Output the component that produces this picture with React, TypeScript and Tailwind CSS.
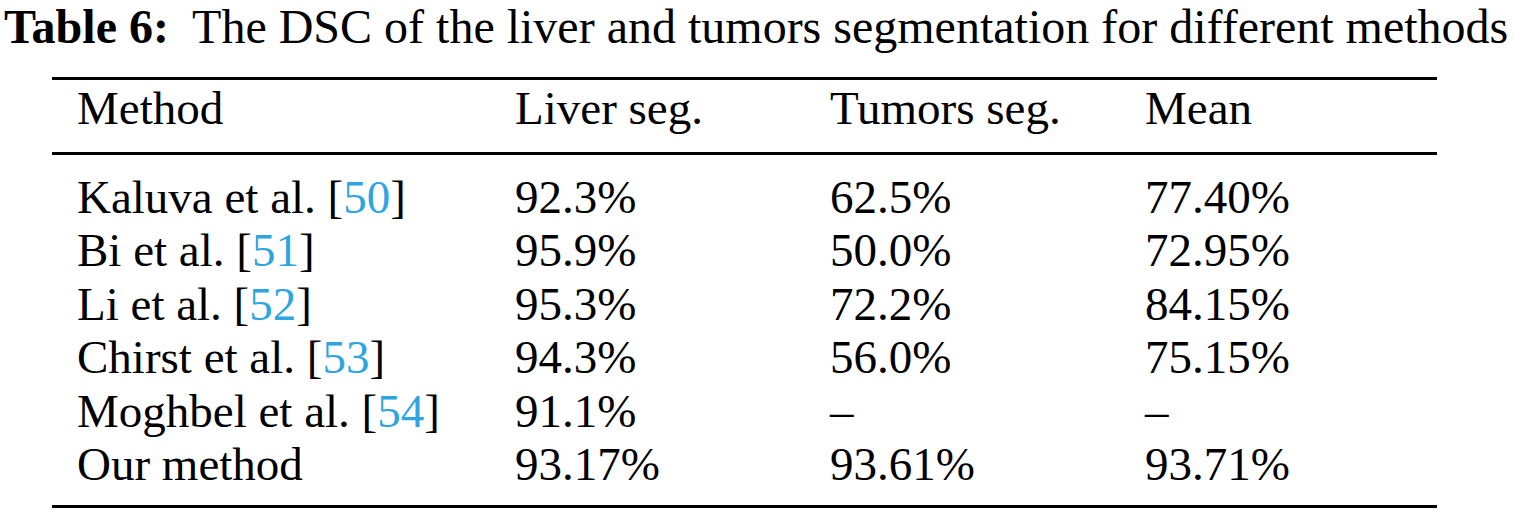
import React from "react";

const rows: [string, string | null, string, string, string][] = [
  ["Kaluva et al. ", "50", "92.3%", "62.5%", "77.40%"],
  ["Bi et al. ", "51", "95.9%", "50.0%", "72.95%"],
  ["Li et al. ", "52", "95.3%", "72.2%", "84.15%"],
  ["Chirst et al. ", "53", "94.3%", "56.0%", "75.15%"],
  ["Moghbel et al. ", "54", "91.1%", "–", "–"],
  ["Our method", null, "93.17%", "93.61%", "93.71%"],
];

export default function App() {
  return (
    <div
      className="w-[1514px] h-[514px] bg-white text-black overflow-hidden"
      style={{ fontFamily: '"Liberation Serif", "Times New Roman", serif' }}
    >
      <div className="pl-[4px] h-[77px] text-[48px] leading-[54px] whitespace-nowrap">
        <span className="font-bold">Table 6:</span>
        <span>&nbsp; The DSC of the liver and tumors segmentation for different methods</span>
      </div>
      <div className="ml-[52px] w-[1385px] border-t-[3px] border-b-[3px] border-black">
        <div className="grid grid-cols-[438px_315px_315px_1fr] pl-[25px] text-[47px] leading-[53.4px] h-[75px] pt-[2px] border-b-[3px] border-black">
          <div>Method</div>
          <div>Liver seg.</div>
          <div>Tumors seg.</div>
          <div>Mean</div>
        </div>
        <div className="pl-[25px] pt-[16px] pb-[14px] text-[47px] leading-[53.4px]">
          {rows.map((r, i) => (
            <div key={i} className="grid grid-cols-[438px_315px_315px_1fr]">
              <div>
                {r[0]}
                {r[1] && (
                  <>
                    [<span className="text-[#2ea5e0]">{r[1]}</span>]
                  </>
                )}
              </div>
              <div>{r[2]}</div>
              <div>{r[3]}</div>
              <div>{r[4]}</div>
            </div>
          ))}
        </div>
      </div>
    </div>
  );
}
